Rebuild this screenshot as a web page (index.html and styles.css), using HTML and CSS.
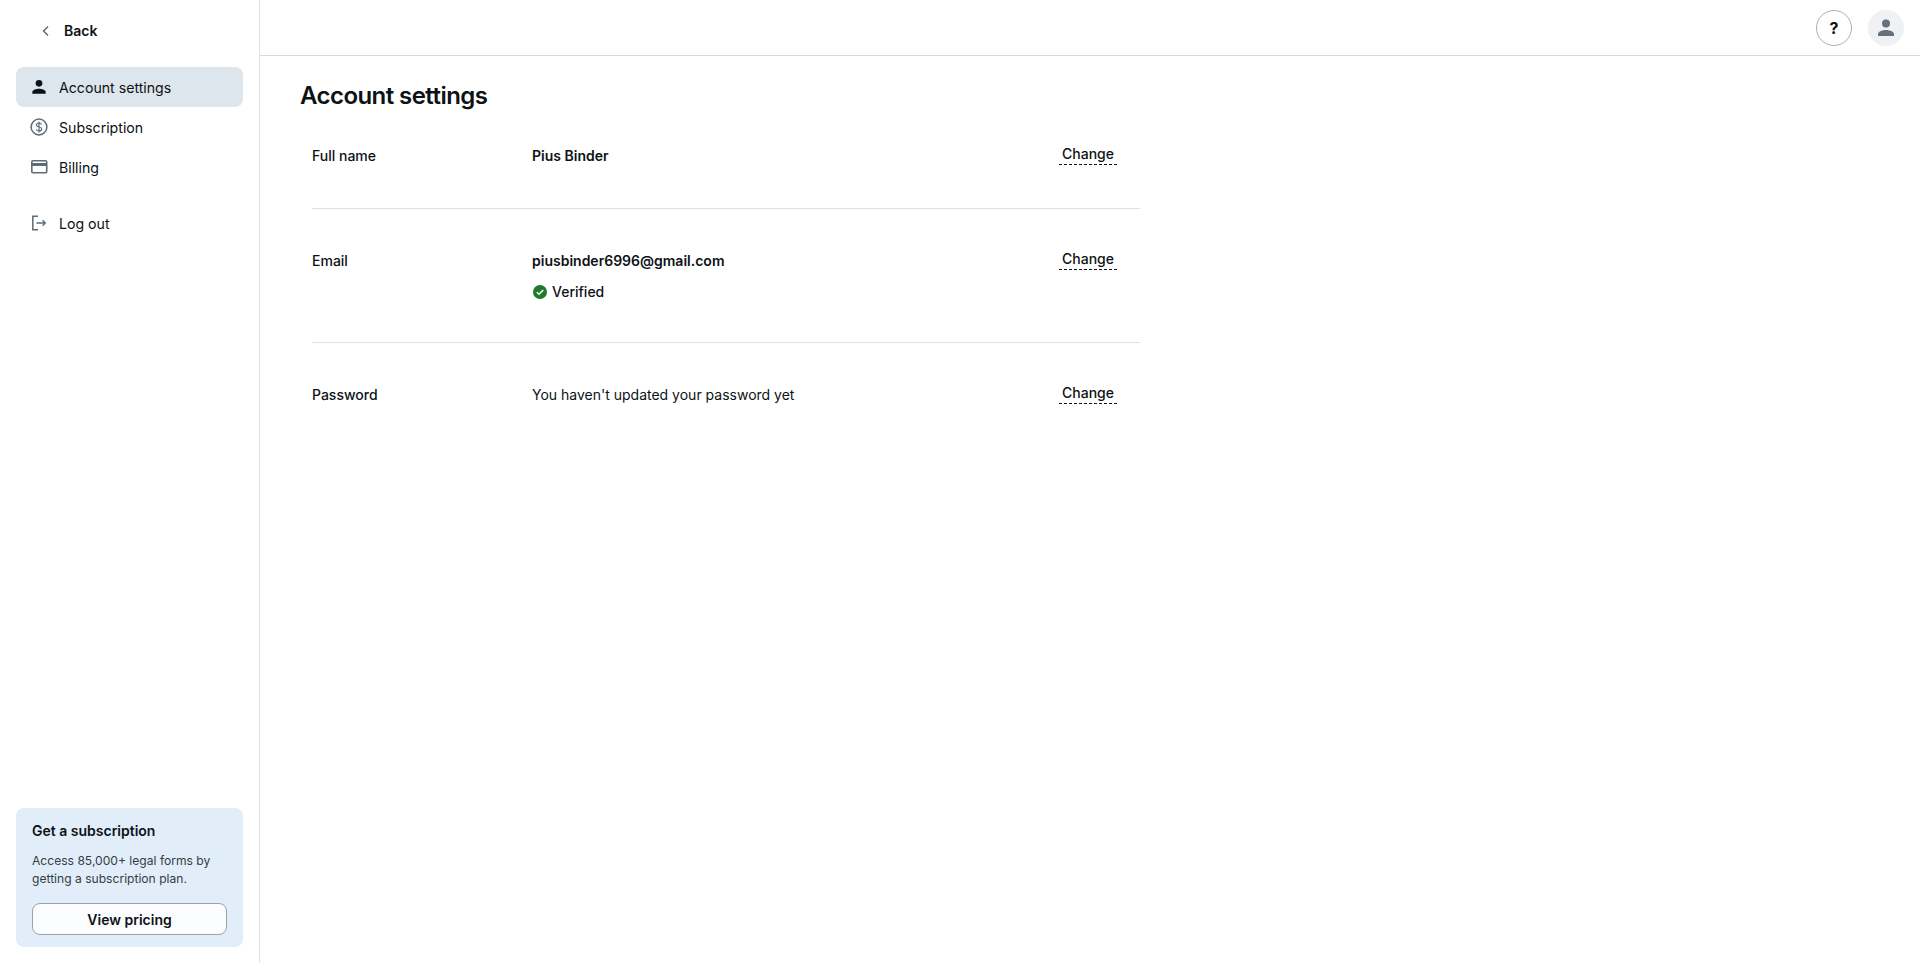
FILE: index.html
```html
<!DOCTYPE html>
<html lang="en">
<head>
<meta charset="utf-8">
<title>Account settings</title>
<link rel="stylesheet" href="styles.css">
</head>
<body>
<div class="app">
  <aside class="sidebar">
    <a class="back">
      <svg class="back-icon" width="16" height="16" viewBox="0 0 16 16" fill="none"><path d="M10 3.500 5.600 8l4.400 4.500" stroke="#5f6b76" stroke-width="1.500"/></svg>
      <span>Back</span>
    </a>
    <nav class="nav">
      <a class="nav-item active">
        <svg width="20" height="20" viewBox="0 0 24 24" fill="#0d1216"><circle cx="12" cy="7.600" r="4"/><path d="M4 20v-2c0-2.700 5.300-4 8-4s8 1.300 8 4v2z"/></svg>
        <span>Account settings</span>
      </a>
      <a class="nav-item">
        <svg width="20" height="20" viewBox="0 0 20 20" fill="none"><circle cx="10" cy="10" r="7.900" stroke="#5f6b76" stroke-width="1.500"/><path d="M12.600 7.500c-.3-1-1.300-1.500-2.600-1.500-1.500 0-2.600.8-2.600 2 0 2.700 5.300 1.300 5.300 4 0 1.200-1.100 2-2.700 2-1.400 0-2.400-.6-2.700-1.700M10 4.500v11" stroke="#5f6b76" stroke-width="1.200"/></svg>
        <span>Subscription</span>
      </a>
      <a class="nav-item">
        <svg width="20" height="20" viewBox="0 0 20 20" fill="none"><rect x="2.800" y="3.800" width="14.900" height="11.900" rx="1.200" stroke="#5f6b76" stroke-width="1.600"/><rect x="2.800" y="6" width="14.900" height="3" fill="#5f6b76"/></svg>
        <span>Billing</span>
      </a>
      <a class="nav-item logout">
        <svg width="20" height="20" viewBox="0 0 20 20" fill="none"><path d="M9 3.200H3.800v13.600H9" stroke="#5f6b76" stroke-width="1.500"/><path d="M7.500 10h8.800M13.600 7.300l2.700 2.700-2.700 2.700" stroke="#5f6b76" stroke-width="1.300"/></svg>
        <span>Log out</span>
      </a>
    </nav>
    <section class="promo">
      <h3 class="promo-title">Get a subscription</h3>
      <p class="promo-text">Access 85,000+ legal forms by getting a subscription plan.</p>
      <button class="promo-btn">View pricing</button>
    </section>
  </aside>
  <div class="main">
    <header class="topbar">
      <button class="help">?</button>
      <button class="avatar">
        <svg width="24" height="24" viewBox="0 0 24 24" fill="#66717c"><circle cx="12" cy="7.600" r="4"/><path d="M4 20v-2c0-2.700 5.300-4 8-4s8 1.300 8 4v2z"/></svg>
      </button>
    </header>
    <main class="content">
      <h1 class="title">Account settings</h1>
      <div class="rows">
        <div class="row">
          <div class="label">Full name</div>
          <div class="value strong">Pius Binder</div>
          <a class="change">Change</a>
        </div>
        <div class="row">
          <div class="label">Email</div>
          <div class="value">
            <div class="strong">piusbinder6996@gmail.com</div>
            <div class="verified">
              <svg width="16" height="16" viewBox="0 0 16 16"><circle cx="8" cy="8" r="7" fill="#1f7a2a"/><path d="M4.800 8.200 7 10.300l4.200-4.300" fill="none" stroke="#fff" stroke-width="1.500"/></svg>
              <span>Verified</span>
            </div>
          </div>
          <a class="change">Change</a>
        </div>
        <div class="row">
          <div class="label">Password</div>
          <div class="value">You haven't updated your password yet</div>
          <a class="change">Change</a>
        </div>
      </div>
    </main>
  </div>
</div>
</body>
</html>
```
FILE: styles.css
```css
* { box-sizing: border-box; }
html, body { margin: 0; height: 100%; }
body {
  font-family: Inter, "Liberation Sans", sans-serif;
  font-size: 14px;
  line-height: 20px;
  color: #0d1216;
  background: #fff;
}
.app { display: flex; height: 963px; overflow: hidden; }
.sidebar {
  width: 260px;
  flex: none;
  border-right: 1px solid #dfe2e5;
  padding: 0 16px 16px;
  display: flex;
  flex-direction: column;
}
.back {
  height: 62px;
  margin-bottom: 5px;
  padding-left: 22px;
  display: flex;
  align-items: center;
  gap: 10px;
  font-weight: 600;
}
.back-icon { flex: none; margin-top: -1px; }
.nav { display: flex; flex-direction: column; }
.nav-item {
  height: 40px;
  padding: 2px 12px 0 13px;
  border-radius: 8px;
  display: flex;
  align-items: center;
  gap: 10px;
  font-size: 14.150px;
}
.nav-item svg { flex: none; margin-top: -2px; }
.nav-item.active { background: #dde6ec; }
.nav-item.logout { margin-top: 16px; }
.promo {
  margin-top: auto;
  height: 139px;
  background: #e1edf9;
  border-radius: 8px;
  padding: 13px 16px 12px;
  display: flex;
  flex-direction: column;
}
.promo-title { margin: 0; font-size: 14px; line-height: 20px; font-weight: 600; }
.promo-text { margin: 11px 0 0; font-size: 12.100px; line-height: 18px; color: #343d46; }
.promo-btn {
  margin-top: auto;
  height: 32px;
  padding: 1px 0 0;
  border: 1px solid #9aa3ab;
  border-radius: 8px;
  background: #fafcfe;
  font: 600 14px/20px Inter, sans-serif;
  color: #0d1216;
}
.main { flex: 1; min-width: 0; display: flex; flex-direction: column; }
.topbar {
  height: 56px;
  flex: none;
  border-bottom: 1px solid #d6dadd;
  padding: 0 16px 0 0;
  display: flex;
  align-items: center;
  justify-content: flex-end;
  gap: 16px;
}
.help {
  width: 36px;
  height: 36px;
  padding: 0;
  border: 1px solid #a9b1b8;
  border-radius: 50%;
  background: #fff;
  font: 700 16px/20px Inter, sans-serif;
  color: #0d1216;
}
.avatar {
  width: 36px;
  height: 36px;
  padding: 0;
  border: 0;
  border-radius: 50%;
  background: #eff1f5;
  display: flex;
  align-items: center;
  justify-content: center;
}
.content { padding: 24px 40px; }
.title { margin: 0 0 34px; font-size: 24px; line-height: 32px; font-weight: 600; letter-spacing: -0.56px; }
.rows { width: 828px; margin-left: 12px; }
.row {
  display: flex;
  align-items: flex-start;
  padding: 0 0 42px;
  margin-bottom: 42px;
  border-bottom: 1px solid #dfe2e5;
}
.row:last-child { border-bottom: 0; }
.label { width: 220px; flex: none; font-weight: 500; font-size: 14px; }
.value { flex: 1; min-width: 0; font-size: 14px; }
.strong { font-weight: 600; }
.verified { display: flex; align-items: center; gap: 3px; margin-top: 12px; margin-bottom: -1px; font-weight: 500; line-height: 18px; }
.verified svg { margin-right: 1px; }
.change {
  margin-right: 23px;
  margin-top: -2px;
  padding: 0 3px;
  font-weight: 500;
  font-size: 14px;
  line-height: 20px;
  border-bottom: 1px dashed #0d1216;
}
```
